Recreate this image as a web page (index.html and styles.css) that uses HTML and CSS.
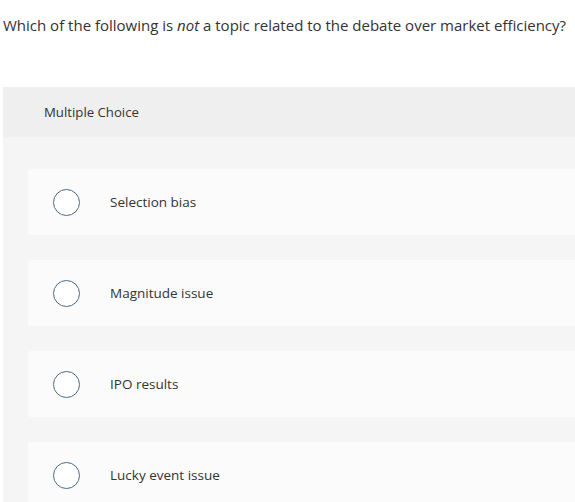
FILE: index.html
```html
<!DOCTYPE html>
<html>
<head>
<meta charset="utf-8">
<link rel="stylesheet" href="styles.css">
</head>
<body>
<p class="question">Which of the following is <em>not</em> a topic related to the debate over market efficiency?</p>
<section class="panel">
  <div class="panel-head">Multiple Choice</div>
  <div class="options">
    <div class="option"><span class="radio"></span><span class="label">Selection bias</span></div>
    <div class="option"><span class="radio"></span><span class="label">Magnitude issue</span></div>
    <div class="option"><span class="radio"></span><span class="label">IPO results</span></div>
    <div class="option"><span class="radio"></span><span class="label">Lucky event issue</span></div>
  </div>
</section>
</body>
</html>
```
FILE: styles.css
```css
html, body {
  margin: 0;
  padding: 0;
  background: #ffffff;
  overflow: hidden;
}
body {
  font-family: "Open Sans", "Liberation Sans", sans-serif;
  color: #333333;
  width: 575px;
  height: 502px;
}
.question {
  margin: 0;
  padding: 14px 0 0 3px;
  font-size: 15px;
  line-height: 22px;
  height: 87px;
  box-sizing: border-box;
  white-space: nowrap;
}
.question em {
  font-style: italic;
}
.panel {
  margin-left: 3px;
  background: #f5f5f5;
  height: 415px;
}
.panel-head {
  background: #efefef;
  height: 50px;
  display: flex;
  align-items: center;
  padding-left: 41px;
  font-size: 13.2px;
  color: #333333;
}
.options {
  display: flex;
  flex-direction: column;
  gap: 25px;
  padding: 32px 0 0 25px;
}
.option {
  background: #fbfbfb;
  height: 66px;
  border-radius: 3px 0 0 3px;
  display: flex;
  align-items: center;
  padding-left: 25px;
}
.radio {
  width: 25px;
  height: 25px;
  border: 1.5px solid #4a6a82;
  border-radius: 50%;
  background: #ffffff;
  flex: none;
}
.label {
  margin-left: 30px;
  font-size: 13.5px;
  color: #333333;
}
```
